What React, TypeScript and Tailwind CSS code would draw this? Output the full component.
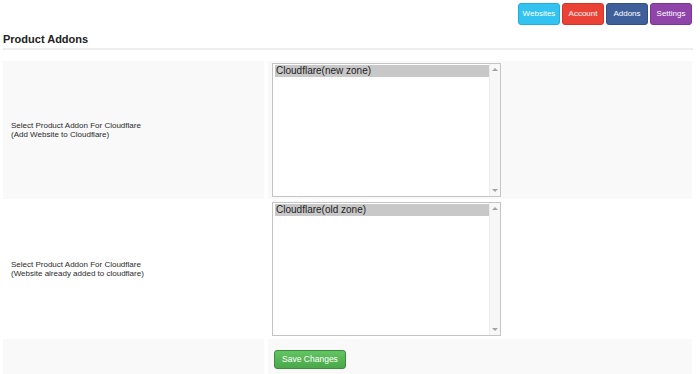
import React from 'react';

// Top navigation buttons
const navButtons = [
  { label: 'Websites', className: 'bg-[#33c3f0] border-[#1fb0dd]' },
  { label: 'Account', className: 'bg-[#ea4335] border-[#d0352a]' },
  { label: 'Addons', className: 'bg-[#3f5f9b] border-[#324f86]' },
  { label: 'Settings', className: 'bg-[#8e44a8] border-[#7a3692]' },
];

interface AddonRow {
  title: string;
  note: string;
  option: string;
  bg: string;
}

const rows: AddonRow[] = [
  {
    title: 'Select Product Addon For Cloudflare',
    note: '(Add Website to Cloudflare)',
    option: 'Cloudflare(new zone)',
    bg: 'bg-[#f9f9f9]',
  },
  {
    title: 'Select Product Addon For Cloudflare',
    note: '(Website already added to cloudflare)',
    option: 'Cloudflare(old zone)',
    bg: 'bg-white',
  },
];

// Multi-select listbox drawn like the browser's native one (always-on scrollbar)
function ListBox({ option }: { option: string }) {
  return (
    <div className="flex w-[229px] h-[134px] border border-[#c4c4c4] bg-white">
      <div className="flex-1 pl-[2px] pt-[1px]">
        <div className="h-[12px] bg-[#c8c8c8] pl-[1px] text-[10px] leading-[12px] text-[#222]">{option}</div>
      </div>
      <div className="w-[11px] flex flex-col justify-between items-center border-l border-[#ececec] bg-[#f7f7f7] py-[3px]">
        <svg width="6" height="4" viewBox="0 0 6 4">
          <path d="M0 4 L3 1 L6 4 Z" fill="#a3a3a3" />
        </svg>
        <svg width="6" height="4" viewBox="0 0 6 4">
          <path d="M0 0 L6 0 L3 3 Z" fill="#a3a3a3" />
        </svg>
      </div>
    </div>
  );
}

export default function App() {
  return (
    <div className="w-[700px] h-[374px] overflow-hidden bg-white text-[#333] font-['Liberation_Sans',Arial,sans-serif]">
      {/* Nav */}
      <div className="flex justify-end gap-[2px] pt-[3px] pr-[8px]">
        {navButtons.map((b) => (
          <button
            key={b.label}
            className={`h-[22px] w-[42px] rounded-[3px] border text-[8px] text-white ${b.className}`}
          >
            {b.label}
          </button>
        ))}
      </div>

      {/* Heading */}
      <div className="ml-[3px] mr-[7px] mt-[8px] border-b-2 border-[#eee] pb-[2px]">
        <h2 className="text-[11px] font-bold leading-[13px] text-[#222]">Product Addons</h2>
      </div>

      {/* Settings table */}
      <div className="ml-[3px] mr-[8px] mt-[11px] flex flex-col">
        {rows.map((row, i) => (
          <div key={i} className={`flex ${i === 0 ? 'h-[138px]' : 'h-[140px]'}`}>
            <div className={`w-[261px] flex flex-col justify-center pl-[8px] text-[8px] leading-[9px] text-[#2a2a2a] ${row.bg}`}>
              <span>{row.title}</span>
              <span>{row.note}</span>
            </div>
            <div className={`ml-[4px] flex-1 flex items-center pl-[4px] ${row.bg}`}>
              <ListBox option={row.option} />
            </div>
          </div>
        ))}
        <div className="flex h-[40px]">
          <div className="w-[261px] bg-[#f9f9f9]" />
          <div className="ml-[4px] flex-1 flex items-start bg-[#f9f9f9] pl-[6px] pt-[11px]">
            <button className="block h-[19px] w-[72px] rounded-[3px] border border-[#3d8b3d] bg-gradient-to-b from-[#62c462] to-[#4aa84a] text-[8.5px] leading-[17px] text-white">
              Save Changes
            </button>
          </div>
        </div>
      </div>
    </div>
  );
}
